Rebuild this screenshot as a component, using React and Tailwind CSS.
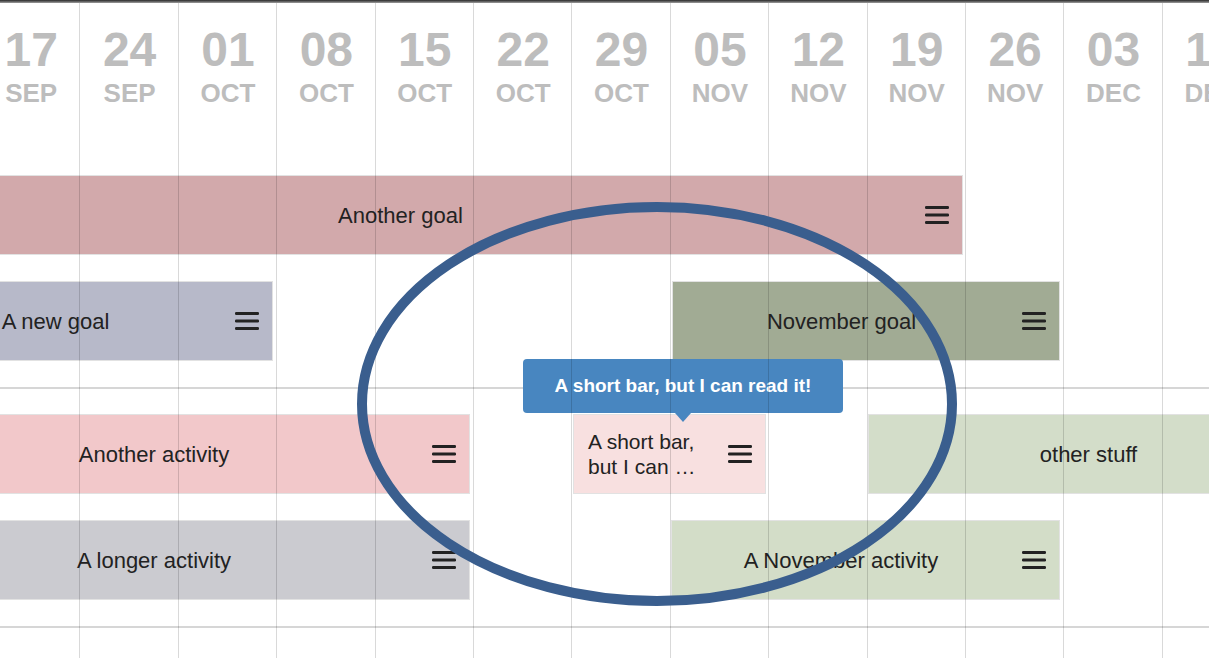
import React from "react";

const COL_W = 98.4;

const dates = [
  ["17", "SEP"],
  ["24", "SEP"],
  ["01", "OCT"],
  ["08", "OCT"],
  ["15", "OCT"],
  ["22", "OCT"],
  ["29", "OCT"],
  ["05", "NOV"],
  ["12", "NOV"],
  ["19", "NOV"],
  ["26", "NOV"],
  ["03", "DEC"],
  ["10", "DEC"],
];

// bars: left / right in px on the timeline canvas
const groups = [
  [
    [{ label: "Another goal", left: -113, right: 963, color: "#d2a9ab" }],
    [
      { label: "A new goal", left: -113, right: 273, color: "#b7b9c9" },
      { label: "November goal", left: 672, right: 1060, color: "#a1ab94" },
    ],
  ],
  [
    [
      { label: "Another activity", left: -113, right: 470, color: "#f2c8ca" },
      { label: "A short bar, but I can …", left: 573, right: 766, color: "#f8e0e0", short: true },
      { label: "other stuff", left: 868, right: 1358, color: "#d3ddc9" },
    ],
    [
      { label: "A longer activity", left: -113, right: 470, color: "#cbcbd0" },
      { label: "A November activity", left: 671, right: 1060, color: "#d3ddc8" },
    ],
  ],
];

function MenuIcon() {
  return (
    <svg width="24" height="18" viewBox="0 0 24 18" className="shrink-0">
      <rect x="0" y="0" width="24" height="3" rx="1.2" fill="#222" />
      <rect x="0" y="7.5" width="24" height="3" rx="1.2" fill="#222" />
      <rect x="0" y="15" width="24" height="3" rx="1.2" fill="#222" />
    </svg>
  );
}

function Bar({ bar }) {
  return (
    <div
      className="absolute top-0 h-[80px] flex items-center border border-[#e2e2e2] pr-[13px]"
      style={{ left: bar.left, width: bar.right - bar.left, backgroundColor: bar.color }}
    >
      {bar.short ? (
        <div className="flex-1 pl-[14px] pr-[10px] text-[21px] leading-[25px] text-[#222]">
          A short bar,
          <br />
          but I can …
        </div>
      ) : (
        <div className="flex-1 pr-[12px] text-center text-[22px] text-[#222] whitespace-nowrap">
          {bar.label}
        </div>
      )}
      <MenuIcon />
    </div>
  );
}

export default function App() {
  return (
    <div className="relative w-[1209px] h-[658px] overflow-hidden bg-white font-['Liberation_Sans',Arial,sans-serif]">
      <div className="h-[3px] bg-linear-to-b from-[#2b2b2b] to-[#a0a0a0]" />

      {/* date header */}
      <div className="flex ml-[-18px] h-[146px]">
        {dates.map(([d, m]) => (
          <div
            key={d + m}
            className="w-[98.4px] shrink-0 flex flex-col items-center pt-[23px] font-bold text-[#bdbdbd]"
          >
            <span className="text-[48px] leading-none">{d}</span>
            <span className="text-[26px] leading-none mt-[6px]">{m}</span>
          </div>
        ))}
      </div>

      {/* swimlanes */}
      {groups.map((rows, gi) => (
        <div
          key={gi}
          className={`flex flex-col gap-[26px] pb-[26px] border-b-2 border-[#d6d6d6] ${
            gi === 0 ? "pt-[26px]" : "pt-[25px]"
          }`}
        >
          {rows.map((row, ri) => (
            <div key={ri} className="relative h-[80px]">
              {row.map((bar) => (
                <Bar key={bar.label} bar={bar} />
              ))}
            </div>
          ))}
        </div>
      ))}

      {/* tooltip */}
      <div className="absolute left-[523px] top-[359px] w-[320px] h-[54px] rounded-[4px] bg-[#4886c0] flex items-center justify-center text-white font-bold text-[19px]">
        A short bar, but I can read it!
        <div className="absolute left-1/2 -translate-x-1/2 top-full w-0 h-0 border-x-[8px] border-x-transparent border-t-[9px] border-t-[#4886c0]" />
      </div>

      {/* column lines */}
      <div className="absolute left-0 right-0 top-[3px] bottom-0 flex ml-[-18px] pointer-events-none">
        {dates.map(([d, m]) => (
          <div key={d + m} className="w-[98.4px] shrink-0 h-full border-r border-black/15" />
        ))}
      </div>

      {/* annotation */}
      <svg className="absolute inset-0 pointer-events-none" width="1209" height="658">
        <ellipse cx="657" cy="404" rx="295" ry="197" fill="none" stroke="#3a5e8e" strokeWidth="10" />
      </svg>
    </div>
  );
}
